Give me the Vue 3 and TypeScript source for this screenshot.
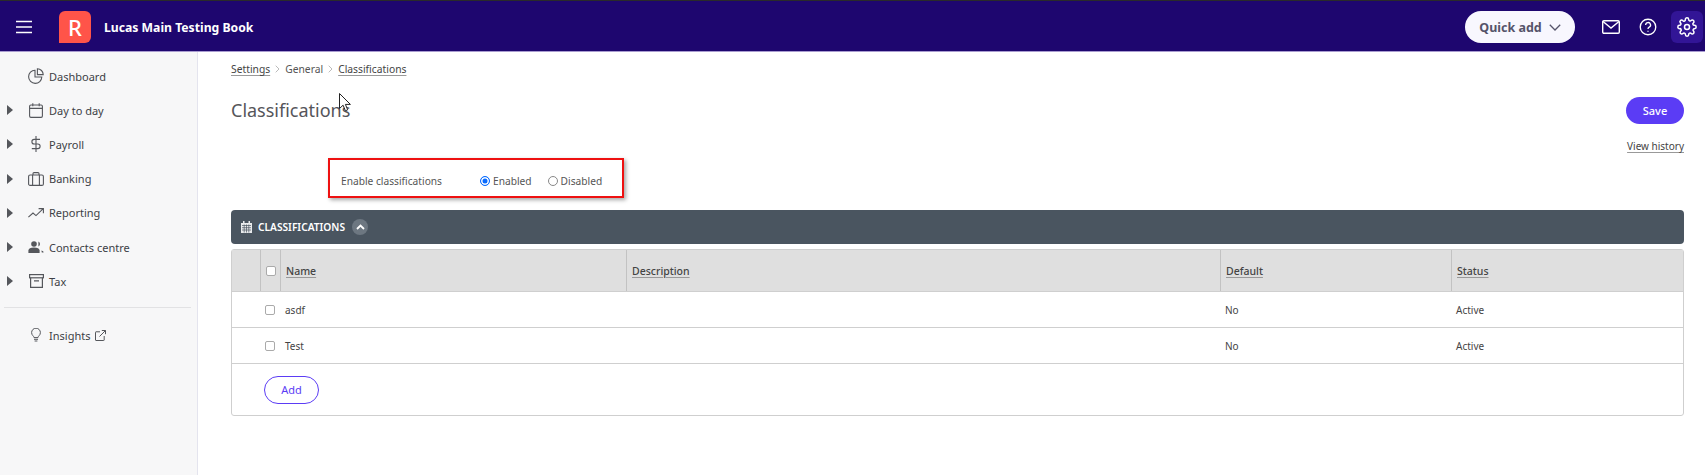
<script setup lang="ts">
const nav = [
  { label: 'Dashboard', icon: 'pie', arrow: false },
  { label: 'Day to day', icon: 'cal', arrow: true },
  { label: 'Payroll', icon: 'dollar', arrow: true },
  { label: 'Banking', icon: 'bag', arrow: true },
  { label: 'Reporting', icon: 'trend', arrow: true },
  { label: 'Contacts centre', icon: 'people', arrow: true },
  { label: 'Tax', icon: 'archive', arrow: true },
]
const rows = [
  { name: 'asdf', def: 'No', status: 'Active' },
  { name: 'Test', def: 'No', status: 'Active' },
]
</script>

<template>
  <div class="page">
    <header class="top">
      <button class="burger" aria-label="Menu">
        <svg width="16" height="14" viewBox="0 0 16 14"><path d="M0 1.500h16M0 7h16M0 12.500h16" stroke="#fff" stroke-width="1.400" /></svg>
      </button>
      <div class="logo">R</div>
      <div class="book">Lucas Main Testing Book</div>
      <div class="spacer"></div>
      <button class="quick">Quick add
        <svg width="12" height="7" viewBox="0 0 12 7"><path d="M.8.8 6 6l5.200-5.200" fill="none" stroke="#55536a" stroke-width="1.300" /></svg>
      </button>
      <div class="tool mail">
        <svg width="18" height="14" viewBox="0 0 18 14" fill="none" stroke="#fff" stroke-width="1.400"><rect x=".7" y=".7" width="16.600" height="12.600" rx="1.200" /><path d="M1 1.500 9 8l8-6.500" /></svg>
      </div>
      <div class="tool help">
        <svg width="18" height="18" viewBox="0 0 19 19" fill="none" stroke="#fff" stroke-width="1.400"><circle cx="9.500" cy="9.500" r="8.200" /><path d="M7 7.400a2.600 2.600 0 1 1 3.800 2.300c-.9.500-1.300 1-1.300 2" /><path d="M9.500 13.400v1.200" /></svg>
      </div>
      <div class="tool gear">
        <svg width="20" height="20" viewBox="0 0 24 24" fill="none" stroke="#fff" stroke-width="1.800" stroke-linejoin="round"><circle cx="12" cy="12" r="3" /><path d="M19.400 15a1.650 1.650 0 0 0 .33 1.820l.06.06a2 2 0 1 1-2.830 2.830l-.06-.06a1.650 1.650 0 0 0-2.820 1.180V21a2 2 0 1 1-4 0v-.09a1.650 1.650 0 0 0-2.880-1.110l-.06.06a2 2 0 1 1-2.830-2.830l.06-.06A1.650 1.650 0 0 0 3.090 14H3a2 2 0 1 1 0-4h.09a1.650 1.650 0 0 0 1.110-2.880l-.06-.06a2 2 0 1 1 2.830-2.830l.06.06A1.650 1.650 0 0 0 10 3.090V3a2 2 0 1 1 4 0v.09a1.650 1.650 0 0 0 2.880 1.110l.06-.06a2 2 0 1 1 2.830 2.830l-.06.06A1.650 1.650 0 0 0 20.910 10H21a2 2 0 1 1 0 4h-.09a1.650 1.650 0 0 0-1.510 1z" /></svg>
      </div>
    </header>

    <div class="body">
      <aside class="side">
        <div v-for="n in nav" :key="n.label" class="nav">
          <span class="arrow" :class="{ hidden: !n.arrow }"></span>
          <span class="ico">
            <svg v-if="n.icon === 'pie'" width="16" height="16" viewBox="0 0 16 16" fill="none" stroke="#55575c" stroke-width="1.100"><path d="M7 2.200a6.600 6.600 0 1 0 6.800 6.800H7z" /><path d="M9.400.8a5.800 5.800 0 0 1 5.800 5.800H9.400z" /></svg>
            <svg v-else-if="n.icon === 'cal'" width="14" height="15" viewBox="0 0 14 15" fill="none" stroke="#55575c" stroke-width="1.100"><rect x=".6" y="2" width="12.800" height="12.400" rx="1.300" /><path d="M.6 5.400h12.800M3.800.2v3M10.200.2v3" /></svg>
            <svg v-else-if="n.icon === 'dollar'" width="10" height="16" viewBox="0 0 10 16" fill="none" stroke="#55575c" stroke-width="1.100"><path d="M5 0v16M9 3.400H3.200a2.300 2.300 0 0 0 0 4.600h3.600a2.300 2.300 0 0 1 0 4.600H.8" /></svg>
            <svg v-else-if="n.icon === 'bag'" width="16" height="14" viewBox="0 0 16 14" fill="none" stroke="#55575c" stroke-width="1.100"><rect x=".6" y="3" width="14.800" height="10.400" rx="1.500" /><path d="M4.600 3v10.400M11.400 3v10.400M5 3V1.600a1 1 0 0 1 1-1h4a1 1 0 0 1 1 1V3" /></svg>
            <svg v-else-if="n.icon === 'trend'" width="16" height="10" viewBox="0 0 16 10" fill="none" stroke="#55575c" stroke-width="1.100"><path d="M.4 9.200 5 5l3 2.600L15 .8M10.600.6h4.800v4.600" /></svg>
            <svg v-else-if="n.icon === 'people'" width="16" height="12" viewBox="0 0 16 12" fill="#55575c"><circle cx="6" cy="3" r="2.800" /><path d="M.4 12V9.600C.4 7.600 2.600 6.600 6 6.600s5.600 1 5.600 3V12z" /><path d="M10.400.6a2.600 2.600 0 0 1 0 4.800zM13.400 9.400l1.800.8.4 1.400h-1.800z" /></svg>
            <svg v-else-if="n.icon === 'archive'" width="15" height="14" viewBox="0 0 15 14" fill="none" stroke="#55575c" stroke-width="1.200"><rect x=".6" y=".6" width="13.800" height="3.200" /><path d="M1.600 3.800v9.600h11.800V3.800M5 6.800h5" /></svg>
          </span>
          <span class="lbl">{{ n.label }}</span>
        </div>
        <div class="rule"></div>
        <div class="nav insights">
          <span class="arrow hidden"></span>
          <span class="ico">
            <svg width="10" height="14" viewBox="0 0 10 14" fill="none" stroke="#55575c" stroke-width="1"><path d="M3 9.600C3 8 .6 7.400.6 4.600a4.400 4.400 0 0 1 8.800 0C9.400 7.400 7 8 7 9.600zM3 11.300h4M3.600 13h2.800" /></svg>
          </span>
          <span class="lbl">Insights</span>
          <svg class="ext" width="11" height="11" viewBox="0 0 11 11" fill="none" stroke="#55575c" stroke-width="1"><path d="M5 1.800H1a.5.500 0 0 0-.5.500v7.700a.5.500 0 0 0 .5.500h7.700a.5.500 0 0 0 .5-.5V6M4.500 6.500 10.500.5M6.800.5h3.700v3.700" /></svg>
        </div>
      </aside>

      <main class="main">
        <nav class="crumbs">
          <a>Settings</a>
          <svg width="5" height="8" viewBox="0 0 5 8"><path d="M.7.7 4 4 .7 7.300" fill="none" stroke="#bbb" /></svg>
          <span>General</span>
          <svg width="5" height="8" viewBox="0 0 5 8"><path d="M.7.7 4 4 .7 7.300" fill="none" stroke="#bbb" /></svg>
          <a>Classifications</a>
        </nav>

        <div class="titlerow">
          <h1>Classifications</h1>
          <button class="save">Save</button>
        </div>
        <div class="histrow"><a>View history</a></div>

        <div class="enable">
          <span class="enlabel">Enable classifications</span>
          <label class="radio"><span class="dot on"></span>Enabled</label>
          <label class="radio"><span class="dot"></span>Disabled</label>
        </div>

        <div class="band">
          <svg width="11" height="12" viewBox="0 0 11 12" fill="#e8eaec"><path d="M0 2h11v10H0zM2 0h1.500v2H2zM7.500 0H9v2H7.500z" /><path d="M1 4.500h9M1 6.700h9M1 9h9M3.200 3.500v8M5.500 3.500v8M7.800 3.500v8" stroke="#4a5560" stroke-width=".7" /></svg>
          <span class="bandtext">CLASSIFICATIONS</span>
          <span class="collapse">
            <svg width="9" height="6" viewBox="0 0 9 6"><path d="M1 5 4.500 1.500 8 5" fill="none" stroke="#fff" stroke-width="1.800" /></svg>
          </span>
        </div>

        <div class="table">
          <div class="row head">
            <div class="c"></div>
            <div class="c chk"><span class="box white"></span></div>
            <div class="c"><a>Name</a></div>
            <div class="c"><a>Description</a></div>
            <div class="c"><a>Default</a></div>
            <div class="c"><a>Status</a></div>
          </div>
          <div v-for="r in rows" :key="r.name" class="row item">
            <div class="c"></div>
            <div class="c chk"><span class="box"></span></div>
            <div class="c">{{ r.name }}</div>
            <div class="c"></div>
            <div class="c">{{ r.def }}</div>
            <div class="c">{{ r.status }}</div>
          </div>
          <div class="foot"><button class="add">Add</button></div>
        </div>

        <svg class="cursor" width="12" height="19" viewBox="0 0 12 19"><path d="M.5.500v15l3.600-3.300 2.300 5.600 2.300-1-2.300-5.400h5z" fill="#fff" stroke="#222" stroke-width="1" /></svg>
      </main>
    </div>
  </div>
</template>

<style>
html, body { margin: 0; background: #fff; }
</style>

<style scoped>
.page { width: 1705px; height: 475px; overflow: hidden; font-family: "Noto Sans", "Open Sans", sans-serif; font-size: 11px; color: #444; background: #fff; }
.top { height: 48px; padding-top: 2px; border-top: 1px solid #2a2a2a; border-bottom: 1px solid #a99cd0; background: #1e066f; display: flex; align-items: center; }
.burger { margin-left: 16px; width: 16px; height: 14px; padding: 0; border: 0; background: none; display: flex; }
.logo { margin-left: 27px; width: 32px; height: 32px; background: #ff5449; border-radius: 6px 6px 6px 0; color: #fff; font-size: 22px; font-weight: 500; display: flex; align-items: center; justify-content: center; }
.book { margin-left: 13px; color: #fff; font-size: 12.200px; font-weight: 700; }
.spacer { flex: 1; }
.quick { width: 110px; height: 32px; border: 0; border-radius: 16px; background: #f8f7fe; color: #55536a; font: 700 12.500px "Noto Sans", sans-serif; display: flex; align-items: center; justify-content: center; gap: 7px; padding: 0; }
.tool { display: flex; align-items: center; justify-content: center; }
.mail { margin-left: 27px; width: 18px; }
.help { margin-left: 19px; width: 18px; }
.gear { margin-left: 14px; margin-right: 2px; width: 32px; height: 32px; background: #321596; border-radius: 6px; }
.body { display: flex; height: 423px; }
.side { width: 197px; flex: none; background: #f7f7f8; border-right: 1px solid #e4e4ee; padding-top: 7px; }
.nav { height: 34.200px; display: flex; align-items: center; color: #3d3f46; font-size: 11px; }
.arrow { width: 0; height: 0; margin-left: 7px; border-left: 6px solid #55575c; border-top: 5px solid transparent; border-bottom: 5px solid transparent; }
.arrow.hidden { visibility: hidden; }
.ico { width: 18px; margin-left: 14px; margin-right: 4px; display: flex; justify-content: center; }
.lbl { white-space: nowrap; }
.rule { height: 1px; margin: 9px 6px 10px 4px; background: #e2e2e4; }
.ext { margin-left: 5px; }
.main { position: relative; flex: 1; padding: 0 21px 0 33px; min-width: 0; }
.crumbs { height: 34px; display: flex; align-items: center; gap: 5px; font-size: 10.300px; color: #555; }
.crumbs a, .histrow a, .head a { text-decoration: underline; text-underline-offset: 2px; text-decoration-color: #999; color: #444; }
.titlerow { display: flex; justify-content: space-between; align-items: center; height: 46px; margin-top: 1px; }
h1 { margin: 0; font-size: 18px; font-weight: 400; color: #55555a; }
.save { width: 58px; height: 27px; border: 0; border-radius: 14px; background: #5b3cf5; color: #fff; font: 500 11px "Noto Sans", sans-serif; padding: 0; }
.histrow { display: flex; justify-content: flex-end; height: 21px; margin-top: 3px; font-size: 10px; line-height: 20px; }
.enable { box-sizing: border-box; width: 296px; height: 40px; margin: 1px 0 0 97px; border: 2px solid #ee1111; box-shadow: 2px 2px 4px rgba(0,0,0,.35); display: flex; align-items: center; padding: 6px 0 0 11px; font-size: 10.200px; color: #555; }
.enlabel { width: 139px; }
.radio { display: flex; align-items: center; gap: 3px; margin-right: 16px; }
.dot { box-sizing: border-box; width: 10px; height: 10px; border-radius: 50%; border: 1px solid #888; background: #fff; }
.dot.on { border-color: #0a6cff; background: #0a6cff; box-shadow: inset 0 0 0 1.500px #fff; }
.band { height: 34px; margin-top: 12px; border-radius: 4px; background: #4a5560; display: flex; align-items: center; padding-left: 10px; color: #fff; }
.bandtext { margin-left: 6px; font-size: 10.200px; font-weight: 600; }
.collapse { margin-left: 7px; width: 16px; height: 16px; border-radius: 50%; background: #6d7781; display: flex; align-items: center; justify-content: center; }
.table { margin-top: 5px; border: 1px solid #cfcfcf; border-radius: 3px; font-size: 10px; }
.row { display: grid; grid-template-columns: 29px 20px 346px 594px 231px 1fr; }
.head { height: 41px; background: #dfdfdf; border-bottom: 1px solid #cfcfcf; font-size: 10.500px; font-weight: 500; }
.head .c { border-right: 1px solid #c2c2c2; padding-left: 5px; display: flex; align-items: center; }
.head .c:last-child { border-right: 0; }
.item { height: 35px; border-bottom: 1px solid #cfcfcf; }
.item .c { display: flex; align-items: center; padding-left: 4px; }
.box { box-sizing: border-box; width: 10px; height: 10px; border: 1px solid #aaa; border-radius: 2px; background: #fff; }
.foot { height: 51px; display: flex; align-items: center; padding-left: 32px; }
.add { width: 55px; height: 28px; border: 1px solid #5b3cf5; border-radius: 14px; background: #fff; color: #5b3cf5; font: 400 11px "Noto Sans", sans-serif; padding: 0; }
.cursor { position: absolute; left: 141px; top: 41px; }
</style>
